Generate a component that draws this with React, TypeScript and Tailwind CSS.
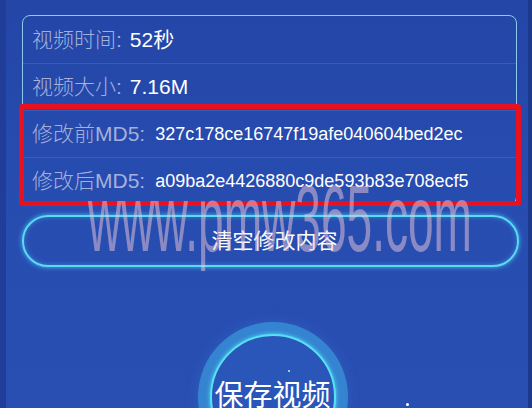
const rows = [
  { label: "视频时间:", value: "52秒", small: false },
  { label: "视频大小:", value: "7.16M", small: false },
  { label: "修改前MD5:", value: "327c178ce16747f19afe040604bed2ec", small: true },
  { label: "修改后MD5:", value: "a09ba2e4426880c9de593b83e708ecf5", small: true },
];

function InfoRow({ label, value, small, first }: { label: string; value: string; small: boolean; first: boolean }) {
  return (
    <div
      className={`flex h-[47px] items-center pl-[9px] ${first ? "" : "border-t border-[#ffffff1c]"}`}
    >
      <span className="text-[21px] font-light text-[#a3b1dc]">{label}</span>
      <span className={`text-white ${small ? "ml-[10px] text-[18px]" : "ml-[8px] text-[21px]"}`}>
        {value}
      </span>
    </div>
  );
}

export default function App() {
  return (
    <div className="relative h-[408px] w-[532px] overflow-hidden bg-[linear-gradient(180deg,#2346a7_0%,#284db1_55%,#2a4fb3_100%)] font-['Liberation_Sans','Noto_Sans_CJK_SC',sans-serif] shadow-[inset_6px_0_0_#1f3d99,inset_-4px_0_0_#1d398b]">
      <div className="flex flex-col pl-[22px] pr-[15px] pt-[15px]">
        {/* info card */}
        <div className="rounded-[8px] border-[1.5px] border-[#8ccaf0]">
          {rows.map((r, i) => (
            <InfoRow key={r.label} label={r.label} value={r.value} small={r.small} first={i === 0} />
          ))}
        </div>

        {/* clear button */}
        <button className="-mr-[2px] mt-[10px] flex h-[52px] items-center justify-center rounded-full border-2 border-[#5cdaf5] pl-[8px] text-[21px] text-white shadow-[0_0_5px_#3fc4ef,inset_0_0_5px_#3fc4ef80]">
          清空修改内容
        </button>

        {/* save button */}
        <div className="mt-[55px] flex justify-center pl-[6px]">
          <div className="flex h-[150px] w-[150px] items-center justify-center rounded-full bg-[radial-gradient(circle,#3584d2_78%,#2d70c6_90%,#2a61bc_100%)] shadow-[0_0_12px_#2f78cc66]">
            <div className="relative flex h-[126px] w-[126px] items-center justify-center rounded-full border-2 border-[#56e2f3] bg-[#2a55b9] text-[29px] text-white shadow-[0_0_4px_#56e2f3]">
              <span className="absolute left-[76px] top-[34px] h-[2px] w-[2px] rounded-full bg-[#cfe6ff]" />
              保存视频
            </div>
          </div>
        </div>
      </div>

      {/* annotation box */}
      <div className="pointer-events-none absolute left-[19px] top-[104px] h-[102px] w-[502px] rounded-[3px] border-[5px] border-[#e8111f]" />

      {/* watermark */}
      <div className="pointer-events-none absolute left-[88px] top-[172px] origin-left scale-x-[0.49] whitespace-nowrap text-[94px] leading-none text-[rgba(235,200,215,0.5)]">
        www.pmw365.com
      </div>

      <span className="absolute left-[406px] top-[403px] h-[3px] w-[3px] rounded-full bg-white" />
    </div>
  );
}
